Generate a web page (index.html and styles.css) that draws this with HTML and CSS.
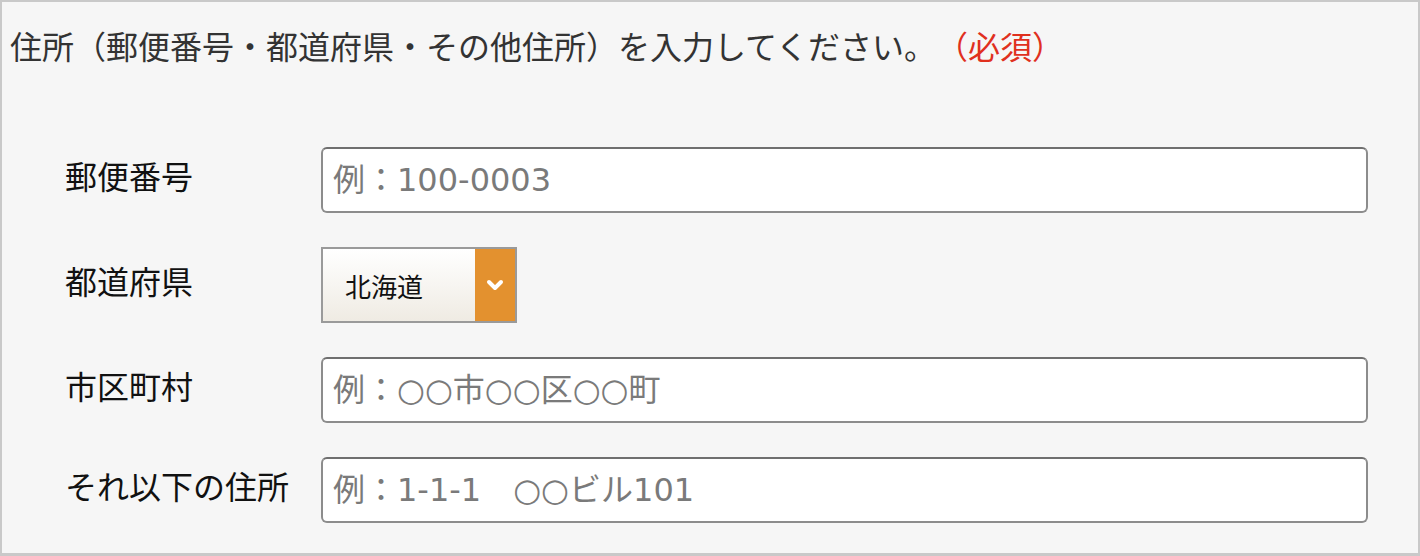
FILE: index.html
```html
<!DOCTYPE html>
<html lang="ja">
<head>
<meta charset="UTF-8">
<meta name="viewport" content="width=device-width, initial-scale=1.0">
<title>住所入力</title>
<link rel="stylesheet" href="styles.css">
</head>
<body>

<div class="address-box">
    <p class="question">住所（郵便番号・都道府県・その他住所）を入力してください。<span class="required">（必須）</span></p>

    <div class="fields">
        <div class="field-row">
            <label for="zip">郵便番号</label>
            <input type="text" id="zip" placeholder="例：100-0003">
        </div>
        <div class="field-row">
            <label for="pref">都道府県</label>
            <div class="select-wrap">
                <select id="pref">
                    <option>北海道</option>
                    <option>青森県</option>
                    <option>岩手県</option>
                    <option>東京都</option>
                </select>
                <span class="select-arrow">
                    <svg width="18" height="12" viewBox="0 0 18 12"><path d="M3 3 L9 9 L15 3" fill="none" stroke="#fff" stroke-width="4" stroke-linecap="round" stroke-linejoin="round"/></svg>
                </span>
            </div>
        </div>
        <div class="field-row">
            <label for="city">市区町村</label>
            <input type="text" id="city" placeholder="例：○○市○○区○○町">
        </div>
        <div class="field-row">
            <label for="street">それ以下の住所</label>
            <input type="text" id="street" placeholder="例：1-1-1　○○ビル101">
        </div>
    </div>
</div>

</body>
</html>
```

FILE: styles.css
```css
body {
    margin: 0;
    padding: 0;
    font-family: "Noto Sans CJK JP", "Noto Sans", sans-serif;
    background-color: #ffffff;
}

.address-box {
    box-sizing: border-box;
    height: 556px;
    border: 2px solid #c9c9c9;
    border-bottom-width: 3px;
    background-color: #f6f6f6;
    padding: 15px 50px 0 8px;
}

.question {
    margin: 0;
    font-size: 32px;
    line-height: 56px;
    color: #333333;
}

.required {
    color: #e0301e;
    margin-left: 16px;
}

.fields {
    margin-top: 74px;
    padding-left: 55px;
    display: flex;
    flex-direction: column;
    gap: 34px;
}

.field-row {
    display: grid;
    grid-template-columns: 256px 1fr;
    align-items: center;
}

.field-row label {
    font-size: 32px;
    color: #111111;
    padding-bottom: 10px;
}

.field-row input {
    box-sizing: border-box;
    width: 100%;
    height: 66px;
    padding: 0 10px;
    font-family: "DejaVu Sans", "Noto Sans CJK JP", sans-serif;
    font-size: 32px;
    background: #ffffff;
    border: 2px solid #8c8c8c;
    border-top-color: #6f6f6f;
    border-radius: 6px;
    outline: none;
}

.field-row input::placeholder {
    color: #7a7a7a;
}

.select-wrap {
    box-sizing: border-box;
    width: 196px;
    height: 76px;
    display: flex;
    border: 2px solid #9a9a9a;
}

.select-wrap select {
    flex: 1;
    min-width: 0;
    appearance: none;
    border: none;
    border-radius: 0;
    padding: 0 0 0 22px;
    font-family: "Noto Sans CJK JP", sans-serif;
    font-size: 26px;
    color: #111111;
    background: linear-gradient(#ffffff, #efebe3);
    outline: none;
}

.select-arrow {
    width: 40px;
    background-color: #e3912f;
    display: flex;
    align-items: center;
    justify-content: center;
}
```
